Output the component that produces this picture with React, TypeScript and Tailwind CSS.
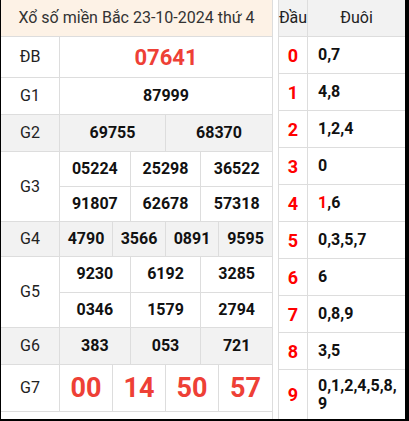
import React from 'react'

const font = { fontFamily: 'Roboto, "Noto Sans", Arial, sans-serif' }

const heads: { d: string; tail: React.ReactNode }[] = [
  { d: '0', tail: '0,7' },
  { d: '1', tail: '4,8' },
  { d: '2', tail: '1,2,4' },
  { d: '3', tail: '0' },
  { d: '4', tail: <><span className="text-[#ff0000]">1</span>,6</> },
  { d: '5', tail: '0,3,5,7' },
  { d: '6', tail: '6' },
  { d: '7', tail: '0,8,9' },
  { d: '8', tail: '3,5' },
]

function Cells({ nums, cols, className = '' }: { nums: string[]; cols: 2 | 3 | 4; className?: string }) {
  const grid = cols === 2 ? 'grid-cols-2' : cols === 3 ? 'grid-cols-3' : 'grid-cols-4'
  return (
    <div className={`grid ${grid} h-full divide-x divide-[#dddddd] ${className}`}>
      {nums.map((n, i) => (
        <div key={i} className="flex items-center justify-center">
          {n}
        </div>
      ))}
    </div>
  )
}

function Row({
  label,
  h,
  gray,
  children,
}: {
  label: string
  h: string
  gray?: boolean
  children: React.ReactNode
}) {
  return (
    <div className={`flex border-b border-[#dddddd] ${h} ${gray ? 'bg-[#f2f2f2]' : ''}`}>
      <div className="w-[59px] shrink-0 border-r border-[#dddddd] flex items-center justify-center text-[16px] text-[#222]">
        {label}
      </div>
      <div className="flex-1 text-[16px] font-bold text-[#111]">{children}</div>
    </div>
  )
}

export default function App() {
  return (
    <div
      className="w-[409px] h-[421px] flex bg-white border-l border-r-4 border-b-2 border-black"
      style={font}
    >
      {/* Kết quả */}
      <div className="w-[272px] shrink-0 border-r border-[#dddddd] flex flex-col">
        <div className="h-[37px] shrink-0 border-b border-[#dddddd] bg-[#fdf2e6] flex items-center justify-center text-[16px] text-[#333]">
          Xổ số miền Bắc 23-10-2024 thứ 4
        </div>
        <Row label="ĐB" h="h-[41px]">
          <div className="h-full flex items-center justify-center text-[22px] text-[#ee4036]">07641</div>
        </Row>
        <Row label="G1" h="h-[37px]">
          <div className="h-full flex items-center justify-center">87999</div>
        </Row>
        <Row label="G2" h="h-[37px]" gray>
          <Cells cols={2} nums={['69755', '68370']} />
        </Row>
        <Row label="G3" h="h-[70px]">
          <div className="h-full flex flex-col">
            <Cells cols={3} nums={['05224', '25298', '36522']} className="flex-1 border-b border-[#dddddd]" />
            <Cells cols={3} nums={['91807', '62678', '57318']} className="flex-1" />
          </div>
        </Row>
        <Row label="G4" h="h-[35px]" gray>
          <Cells cols={4} nums={['4790', '3566', '0891', '9595']} />
        </Row>
        <Row label="G5" h="h-[71px]">
          <div className="h-full flex flex-col">
            <Cells cols={3} nums={['9230', '6192', '3285']} className="flex-1 border-b border-[#dddddd]" />
            <Cells cols={3} nums={['0346', '1579', '2794']} className="flex-1" />
          </div>
        </Row>
        <Row label="G6" h="h-[37px]" gray>
          <Cells cols={3} nums={['383', '053', '721']} />
        </Row>
        <Row label="G7" h="h-[47px]">
          <Cells cols={4} nums={['00', '14', '50', '57']} className="text-[27px] text-[#ee4036]" />
        </Row>
      </div>

      {/* Đầu - Đuôi */}
      <div className="ml-[5px] flex-1 border-l border-[#dddddd] flex flex-col">
        <div className="flex h-[37px] shrink-0 border-b border-[#dddddd] bg-[#f2f2f2] text-[16px] text-[#222]">
          <div className="w-[29px] shrink-0 border-r border-[#dddddd] flex items-center justify-center whitespace-nowrap">
            Đầu
          </div>
          <div className="flex-1 flex items-center justify-center">Đuôi</div>
        </div>
        {heads.map((r) => (
          <div key={r.d} className="flex h-[37px] shrink-0 border-b border-[#dddddd]">
            <div className="w-[29px] shrink-0 border-r border-[#dddddd] flex items-center justify-center text-[18px] font-bold text-[#ff0000]">
              {r.d}
            </div>
            <div className="flex-1 flex items-center pl-[10px] text-[16px] font-bold text-[#111]">{r.tail}</div>
          </div>
        ))}
        <div className="flex flex-1">
          <div className="w-[29px] shrink-0 border-r border-[#dddddd] flex items-center justify-center text-[18px] font-bold text-[#ff0000]">
            9
          </div>
          <div className="flex-1 flex items-center pl-[10px] text-[16px] leading-[18px] font-bold text-[#111]">
            <span>
              0,1,2,4,5,8,
              <br />
              9
            </span>
          </div>
        </div>
      </div>
    </div>
  )
}
